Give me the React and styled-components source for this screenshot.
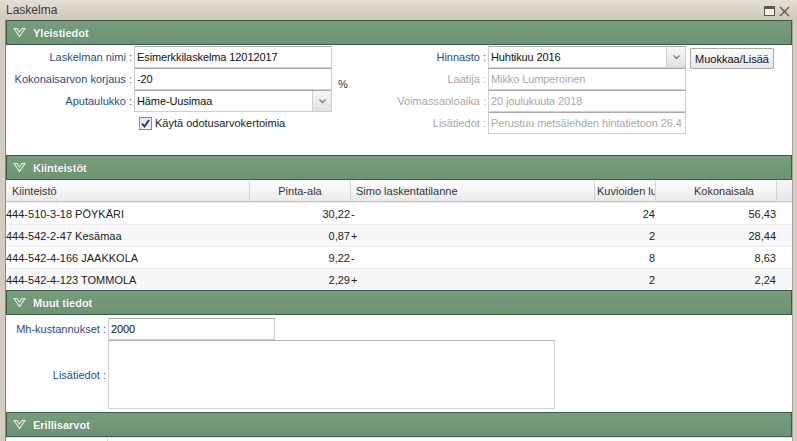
import styled, { createGlobalStyle } from "styled-components";

const GlobalStyle = createGlobalStyle`
  html, body {
    margin: 0;
    padding: 0;
    background: #fff;
  }
  body {
    font-family: "Liberation Sans", Arial, sans-serif;
    font-size: 11px;
  }
`;

const generalLeft = [
  { label: "Laskelman nimi", value: "Esimerkkilaskelma 12012017" },
  { label: "Kokonaisarvon korjaus", value: "-20", unit: "%" },
  { label: "Aputaulukko", value: "Häme-Uusimaa", select: true },
];

const generalRight = [
  { label: "Hinnasto", value: "Huhtikuu 2016", select: true, button: "Muokkaa/Lisää" },
  { label: "Laatija", value: "Mikko Lumperoinen", disabled: true },
  { label: "Voimassaoloaika", value: "20 joulukuuta 2018", disabled: true },
  { label: "Lisätiedot", value: "Perustuu metsälehden hintatietoon 26.4", disabled: true },
];

const columns = [
  { title: "Kiinteistö", width: 244, head: "left", cell: "left", pad: 6 },
  { title: "Pinta-ala", width: 101, head: "center", cell: "right", pad: 0 },
  { title: "Simo laskentatilanne", width: 244, head: "left", cell: "left", pad: 5 },
  { title: "Kuvioiden lu", width: 61, head: "left", cell: "right", pad: 2 },
  { title: "Kokonaisala", width: 121, head: "center", cell: "right", pad: 16 },
];

const properties = [
  ["444-510-3-18 PÖYKÄRI", "30,22", "-", "24", "56,43"],
  ["444-542-2-47 Kesämaa", "0,87", "+", "2", "28,44"],
  ["444-542-4-166 JAAKKOLA", "9,22", "-", "8", "8,63"],
  ["444-542-4-123 TOMMOLA", "2,29", "+", "2", "2,24"],
];

function Chevron() {
  return (
    <svg width="13" height="11" viewBox="0 0 13 11">
      <path
        d="M1 1.5 L4 1.5 L6.5 5 L9 1.5 L12 1.5 L6.5 9.5 Z"
        fill="none"
        stroke="#e8f0e8"
        strokeWidth="1.2"
        strokeLinejoin="round"
      />
    </svg>
  );
}

function SectionHeader({ title }) {
  return (
    <Header>
      <Chevron />
      <HeaderTitle>{title}</HeaderTitle>
    </Header>
  );
}

function Field({ item }) {
  return (
    <>
      <Label $muted={item.disabled}>{item.label} :</Label>
      <InputWrap>
        <TextBox readOnly value={item.value} $muted={item.disabled} />
        {item.select && (
          <DropButton>
            <svg width="9" height="6" viewBox="0 0 9 6">
              <path d="M1.5 1.5 L4.5 4.5 L7.5 1.5" fill="none" stroke="#7a7a7a" strokeWidth="1.4" />
            </svg>
          </DropButton>
        )}
      </InputWrap>
      <Extra>
        {item.unit && <Unit>{item.unit}</Unit>}
        {item.button && <Button>{item.button}</Button>}
      </Extra>
    </>
  );
}

export default function App() {
  return (
    <>
      <GlobalStyle />
      <Window>
        <TitleBar>
          <span>Laskelma</span>
          <TitleIcons>
            <svg width="11" height="10" viewBox="0 0 11 10">
              <rect x="0.5" y="0.5" width="10" height="9" fill="#f4f1ec" stroke="#555" />
              <rect x="0.5" y="0.5" width="10" height="2.5" fill="#555" />
            </svg>
            <svg width="11" height="11" viewBox="0 0 11 11">
              <path d="M1 1 L10 10 M10 1 L1 10" stroke="#555" strokeWidth="1.3" />
            </svg>
          </TitleIcons>
        </TitleBar>

        <Body>
          <SectionHeader title="Yleistiedot" />
          <GeneralPanel>
            <LeftGrid>
              {generalLeft.map((item) => (
                <Field key={item.label} item={item} />
              ))}
              <CheckRow>
                <CheckBox>
                  <svg width="9" height="9" viewBox="0 0 9 9">
                    <path d="M1 4.5 L3.5 7.5 L8 1" fill="none" stroke="#1d2f6b" strokeWidth="1.8" />
                  </svg>
                </CheckBox>
                Käytä odotusarvokertoimia
              </CheckRow>
            </LeftGrid>
            <RightGrid>
              {generalRight.map((item) => (
                <Field key={item.label} item={item} />
              ))}
            </RightGrid>
          </GeneralPanel>

          <SectionHeader title="Kiinteistöt" />
          <TablePanel>
            <TableRow>
              {columns.map((c) => (
                <HeadCell key={c.title} $w={c.width} $align={c.head} $pad={c.pad}>
                  {c.title}
                </HeadCell>
              ))}
              <HeadFiller />
            </TableRow>
            {properties.map((row, i) => (
              <TableRow key={row[0]} $alt={i % 2 === 1}>
                {row.map((v, j) => (
                  <Cell key={j} $w={columns[j].width} $align={columns[j].cell}>
                    {v}
                  </Cell>
                ))}
              </TableRow>
            ))}
          </TablePanel>

          <SectionHeader title="Muut tiedot" />
          <OtherPanel>
            <OtherLabel>Mh-kustannukset :</OtherLabel>
            <CostBox readOnly value="2000" />
            <OtherLabel>Lisätiedot :</OtherLabel>
            <NotesBox readOnly value="" />
          </OtherPanel>

          <SectionHeader title="Erillisarvot" />
          <SeparatePanel />
        </Body>
      </Window>
    </>
  );
}

// ---------------- styled-components ----------------

const Window = styled.div`
  width: 797px;
  height: 441px;
  display: flex;
  flex-direction: column;
  background: #d3ccc1;
  overflow: hidden;
  font-family: "Liberation Sans", Arial, sans-serif;
  font-size: 11px;
`;

const TitleBar = styled.div`
  height: 20px;
  flex: none;
  display: flex;
  align-items: center;
  justify-content: space-between;
  padding: 0 7px 0 6px;
  background: linear-gradient(#e4ded4, #cfc7bb);
  color: #3b3b3b;
  font-size: 12px;
`;

const TitleIcons = styled.div`
  display: flex;
  align-items: center;
  gap: 4px;
  padding-top: 2px;
`;

const Body = styled.div`
  flex: 1;
  display: flex;
  flex-direction: column;
  margin: 0 4px 0 5px;
  border-left: 1px solid #8c877e;
  border-right: 1px solid #a8a196;
  background: #fff;
  overflow: hidden;
`;

const Header = styled.div`
  height: 25px;
  flex: none;
  box-sizing: border-box;
  display: flex;
  align-items: center;
  gap: 7px;
  padding-left: 6px;
  background: linear-gradient(#769d7c, #6c9373);
  border: 1px solid #3e5a45;
  color: #fff;
`;

const HeaderTitle = styled.span`
  font-weight: bold;
  font-size: 11px;
  text-shadow: 0 0 1px rgba(0, 0, 0, 0.3);
`;

const GeneralPanel = styled.div`
  height: 110px;
  flex: none;
  display: flex;
  padding-top: 1px;
  box-sizing: border-box;
`;

const LeftGrid = styled.div`
  width: 364px;
  display: grid;
  grid-template-columns: 128px 198px 1fr;
  grid-auto-rows: 22px;
  align-content: start;
`;

const RightGrid = styled.div`
  display: grid;
  grid-template-columns: 118px 198px auto;
  grid-auto-rows: 22px;
  align-content: start;
`;

const Label = styled.div`
  text-align: right;
  padding-right: 2px;
  line-height: 22px;
  white-space: nowrap;
  color: ${({ $muted }) => ($muted ? "#a8a8a8" : "#2c4a84")};
`;

const InputWrap = styled.div`
  position: relative;
  display: flex;
`;

const TextBox = styled.input`
  width: 100%;
  height: 22px;
  box-sizing: border-box;
  margin: 0;
  padding: 0 1px 0 2px;
  border: 1px solid #cfcfcf;
  border-top-color: #a9a9a9;
  font: inherit;
  font-size: 11px;
  letter-spacing: -0.1px;
  color: ${({ $muted }) => ($muted ? "#a8a8a8" : "#111")};
  background: #fff;
  outline: none;
`;

const DropButton = styled.div`
  position: absolute;
  right: 1px;
  top: 1px;
  bottom: 1px;
  width: 18px;
  display: flex;
  align-items: center;
  justify-content: center;
  background: linear-gradient(#f6f6f6, #e2e2e2);
  border-left: 1px solid #d0d0d0;
`;

const Extra = styled.div`
  display: flex;
  align-items: flex-start;
`;

const Unit = styled.span`
  padding: 10px 0 0 6px;
  color: #333;
`;

const Button = styled.div`
  margin: 2px 0 0 4px;
  height: 21px;
  box-sizing: border-box;
  padding: 0 4px;
  display: flex;
  align-items: center;
  border: 1px solid #a9a9a9;
  border-radius: 2px;
  background: linear-gradient(#fdfdfd, #e6e6e6);
  color: #111;
  white-space: nowrap;
`;

const CheckRow = styled.div`
  grid-column: 2 / 4;
  display: flex;
  align-items: center;
  gap: 3px;
  padding-left: 5px;
  color: #222;
`;

const CheckBox = styled.span`
  width: 13px;
  height: 13px;
  box-sizing: border-box;
  display: flex;
  align-items: center;
  justify-content: center;
  border: 1px solid #7f8aa3;
  background: linear-gradient(135deg, #dfe6f5, #f8f9fd);
`;

const TablePanel = styled.div`
  height: 110px;
  flex: none;
  padding-top: 1px;
  box-sizing: border-box;
  overflow: hidden;
`;

const TableRow = styled.div`
  display: flex;
  height: 22px;
  box-sizing: border-box;
  border-bottom: 1px solid #ececec;
  background: ${({ $alt }) => ($alt ? "#f8f8f8" : "#fff")};
`;

const HeadCell = styled.div`
  width: ${({ $w }) => $w}px;
  flex: none;
  box-sizing: border-box;
  display: flex;
  align-items: center;
  justify-content: ${({ $align }) => ($align === "center" ? "center" : "flex-start")};
  padding: 0 0 0 ${({ $pad }) => $pad}px;
  overflow: hidden;
  white-space: nowrap;
  background: linear-gradient(#ffffff, #e9e9e9);
  border-right: 1px solid #d3d3d3;
  border-bottom: 1px solid #c9c9c9;
  color: #333;
`;

const HeadFiller = styled.div`
  flex: 1;
  background: linear-gradient(#f7f7f7, #e6e6e6);
  border-bottom: 1px solid #c9c9c9;
`;

const Cell = styled.div`
  width: ${({ $w }) => $w}px;
  flex: none;
  box-sizing: border-box;
  display: flex;
  align-items: center;
  justify-content: ${({ $align }) => ($align === "right" ? "flex-end" : "flex-start")};
  padding-right: ${({ $align }) => ($align === "right" ? "1px" : "0")};
  white-space: nowrap;
  color: #222;
`;

const OtherPanel = styled.div`
  height: 97px;
  flex: none;
  box-sizing: border-box;
  padding-top: 3px;
  display: grid;
  grid-template-columns: 102px auto;
  grid-template-rows: 22px 69px;
  align-content: start;
  justify-content: start;
`;

const OtherLabel = styled.div`
  text-align: right;
  padding-right: 2px;
  align-self: center;
  white-space: nowrap;
  color: #2c4a84;
`;

const CostBox = styled(TextBox)`
  width: 167px;
`;

const NotesBox = styled.textarea`
  width: 447px;
  height: 69px;
  box-sizing: border-box;
  margin: 0;
  border: 1px solid #d2d2d2;
  border-top-color: #b0b0b0;
  resize: none;
  outline: none;
  font: inherit;
`;

const SeparatePanel = styled.div`
  flex: 1;
  border-top: 1px solid #e4e4e4;
  background: linear-gradient(90deg, #fff 101px, #d0d0d0 101px, #d0d0d0 102px, #fff 102px);
`;
